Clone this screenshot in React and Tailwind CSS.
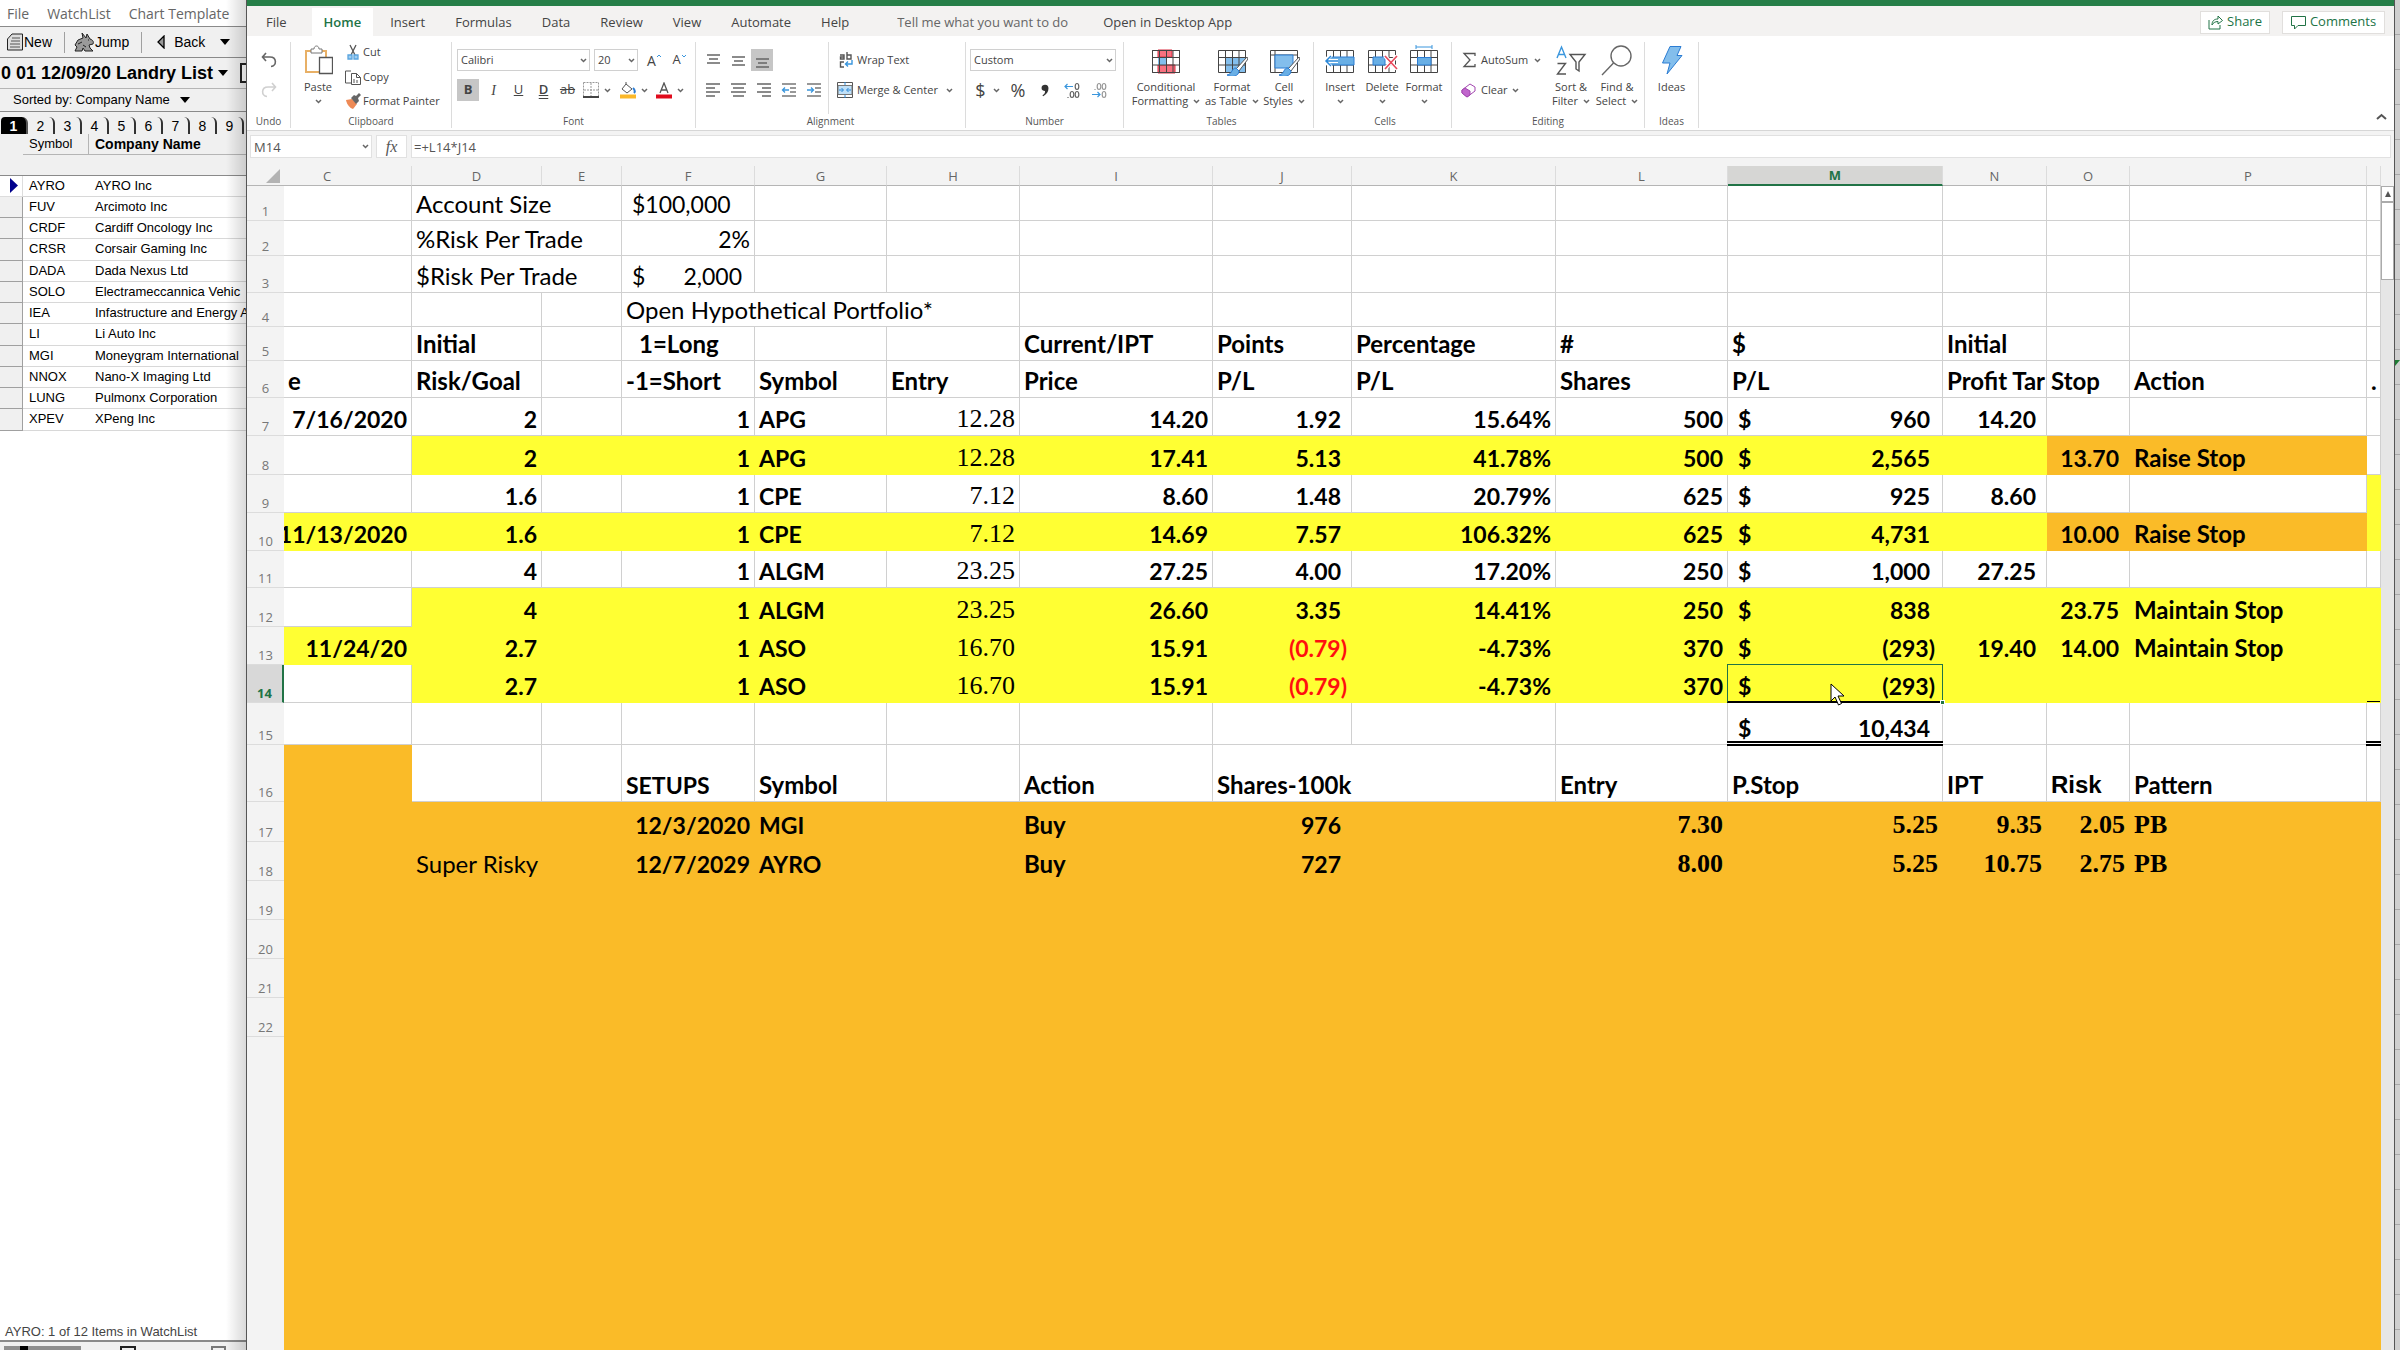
import { clsx } from "clsx"

const watchList = [
  ['AYRO', 'AYRO Inc'],
  ['FUV', 'Arcimoto Inc'],
  ['CRDF', 'Cardiff Oncology Inc'],
  ['CRSR', 'Corsair Gaming Inc'],
  ['DADA', 'Dada Nexus Ltd'],
  ['SOLO', 'Electrameccannica Vehic'],
  ['IEA', 'Infastructure and Energy A'],
  ['LI', 'Li Auto Inc'],
  ['MGI', 'Moneygram International'],
  ['NNOX', 'Nano-X Imaging Ltd'],
  ['LUNG', 'Pulmonx Corporation'],
  ['XPEV', 'XPeng Inc'],
]

const columns = [
  ['C', 'w-[128px]'],
  ['D', 'w-[130px]'],
  ['E', 'w-[80px]'],
  ['F', 'w-[133px]'],
  ['G', 'w-[132px]'],
  ['H', 'w-[133px]'],
  ['I', 'w-[193px]'],
  ['J', 'w-[139px]'],
  ['K', 'w-[204px]'],
  ['L', 'w-[172px]'],
  ['M', 'w-[215px]'],
  ['N', 'w-[104px]'],
  ['O', 'w-[83px]'],
  ['P', 'w-[237px]'],
  ['Q', ''],
]

// cell = [text, style, colSpan]
const styles = {
  left: 'justify-start pl-1 font-bold text-[24px]',
  ticker: 'justify-start pl-1 font-bold',
  right: 'justify-end pr-1 font-bold',
  // number formats that leave room for a closing bracket
  num: 'justify-end pr-[10px] font-bold',
  neg: 'justify-end pr-1 font-bold text-[#ff0f0f]',
  money: 'justify-between pl-[10px] pr-3 font-bold',
  moneyNeg: 'justify-between pl-[10px] pr-[7px] font-bold',
  plain: 'justify-start pl-1 text-[24px]',
  plainIn: 'justify-start pl-[10px]',
  plainRight: 'justify-end pr-1',
  plainMoney: 'justify-between pl-[10px] pr-3',
  label: 'justify-start pl-[17px] font-bold text-[24px]',
  serif: 'justify-end pr-1 font-["Liberation_Serif",serif] text-[26px]',
  serifBold: 'justify-end pr-1 font-["Liberation_Serif",serif] text-[26px] font-bold',
  serifLeft: 'justify-start pl-1 font-["Liberation_Serif",serif] text-[26px] font-bold',
  arial: 'justify-start pl-1 font-["Liberation_Sans",sans-serif] text-[24px] font-bold',
}

const rows = [
  { n: 1, h: 'h-[35px]', c: { D: ['Account Size', 'plain', 2], F: ['$100,000', 'plainIn'] } },
  { n: 2, h: 'h-[35px]', c: { D: ['%Risk Per Trade', 'plain', 2], F: ['2%', 'plainRight'] } },
  { n: 3, h: 'h-[37px]', c: { D: ['$Risk Per Trade', 'plain', 2], F: ['2,000', 'plainMoney'] } },
  { n: 4, h: 'h-[34px]', c: { F: ['Open Hypothetical Portfolio*', 'plain', 3] } },
  { n: 5, h: 'h-[34px]', c: { D: ['Initial', 'left'], F: ['1=Long', 'label'], I: ['Current/IPT', 'left'], J: ['Points', 'left'], K: ['Percentage', 'left'], L: ['#', 'left'], M: ['$', 'left'], N: ['Initial', 'left'] } },
  { n: 6, h: 'h-[37px]', c: { C: ['e', 'left'], D: ['Risk/Goal', 'left'], F: ['-1=Short', 'left'], G: ['Symbol', 'left'], H: ['Entry', 'left'], I: ['Price', 'left'], J: ['P/L', 'left'], K: ['P/L', 'left'], L: ['Shares', 'left'], M: ['P/L', 'left'], N: ['Profit Tar', 'left'], O: ['Stop', 'left'], P: ['Action', 'left'], Q: ['.', 'left'] } },
  { n: 7, h: 'h-[38px]', c: { C: ['7/16/2020', 'right'], D: ['2', 'right'], F: ['1', 'right'], G: ['APG', 'ticker'], H: ['12.28', 'serif'], I: ['14.20', 'right'], J: ['1.92', 'num'], K: ['15.64%', 'right'], L: ['500', 'right'], M: ['960', 'money'], N: ['14.20', 'num'] } },
  { n: 8, h: 'h-[39px]', yellow: 'DEFGHIJKLMN', orange: 'OP', c: { D: ['2', 'right'], F: ['1', 'right'], G: ['APG', 'ticker'], H: ['12.28', 'serif'], I: ['17.41', 'right'], J: ['5.13', 'num'], K: ['41.78%', 'right'], L: ['500', 'right'], M: ['2,565', 'money'], O: ['13.70', 'num'], P: ['Raise Stop', 'left'] } },
  { n: 9, h: 'h-[38px]', yellow: 'Q', c: { D: ['1.6', 'right'], F: ['1', 'right'], G: ['CPE', 'ticker'], H: ['7.12', 'serif'], I: ['8.60', 'right'], J: ['1.48', 'num'], K: ['20.79%', 'right'], L: ['625', 'right'], M: ['925', 'money'], N: ['8.60', 'num'] } },
  { n: 10, h: 'h-[38px]', yellow: 'CDEFGHIJKLMNQ', orange: 'OP', c: { C: ['11/13/2020', 'right'], D: ['1.6', 'right'], F: ['1', 'right'], G: ['CPE', 'ticker'], H: ['7.12', 'serif'], I: ['14.69', 'right'], J: ['7.57', 'num'], K: ['106.32%', 'right'], L: ['625', 'right'], M: ['4,731', 'money'], O: ['10.00', 'num'], P: ['Raise Stop', 'left'] } },
  { n: 11, h: 'h-[37px]', c: { D: ['4', 'right'], F: ['1', 'right'], G: ['ALGM', 'ticker'], H: ['23.25', 'serif'], I: ['27.25', 'right'], J: ['4.00', 'num'], K: ['17.20%', 'right'], L: ['250', 'right'], M: ['1,000', 'money'], N: ['27.25', 'num'] } },
  { n: 12, h: 'h-[39px]', yellow: 'DEFGHIJKLMNOPQ', c: { D: ['4', 'right'], F: ['1', 'right'], G: ['ALGM', 'ticker'], H: ['23.25', 'serif'], I: ['26.60', 'right'], J: ['3.35', 'num'], K: ['14.41%', 'right'], L: ['250', 'right'], M: ['838', 'money'], O: ['23.75', 'num'], P: ['Maintain Stop', 'left'] } },
  { n: 13, h: 'h-[38px]', yellow: 'CDEFGHIJKLMNOPQ', c: { C: ['11/24/20', 'right'], D: ['2.7', 'right'], F: ['1', 'right'], G: ['ASO', 'ticker'], H: ['16.70', 'serif'], I: ['15.91', 'right'], J: ['(0.79)', 'neg'], K: ['-4.73%', 'right'], L: ['370', 'right'], M: ['(293)', 'moneyNeg'], N: ['19.40', 'num'], O: ['14.00', 'num'], P: ['Maintain Stop', 'left'] } },
  { n: 14, h: 'h-[38px]', yellow: 'DEFGHIJKLMNOPQ', c: { D: ['2.7', 'right'], F: ['1', 'right'], G: ['ASO', 'ticker'], H: ['16.70', 'serif'], I: ['15.91', 'right'], J: ['(0.79)', 'neg'], K: ['-4.73%', 'right'], L: ['370', 'right'], M: ['(293)', 'moneyNeg'] } },
  { n: 15, h: 'h-[42px]', c: { M: ['10,434', 'money'] } },
  { n: 16, h: 'h-[57px]', orange: 'C', c: { F: ['SETUPS', 'ticker'], G: ['Symbol', 'left'], I: ['Action', 'left'], J: ['Shares-100k', 'left', 2], L: ['Entry', 'left'], M: ['P.Stop', 'left'], N: ['IPT', 'left'], O: ['Risk', 'arial'], P: ['Pattern', 'left'] } },
  { n: 17, h: 'h-[40px]', orange: 'CDEFGHIJKLMNOPQ', c: { F: ['12/3/2020', 'right'], G: ['MGI', 'ticker'], I: ['Buy', 'left'], J: ['976', 'num'], L: ['7.30', 'serifBold'], M: ['5.25', 'serifBold'], N: ['9.35', 'serifBold'], O: ['2.05', 'serifBold'], P: ['PB', 'serifLeft'] } },
  { n: 18, h: 'h-[39px]', orange: 'CDEFGHIJKLMNOPQ', c: { D: ['Super Risky', 'plain', 2], F: ['12/7/2029', 'right'], G: ['AYRO', 'ticker'], I: ['Buy', 'left'], J: ['727', 'num'], L: ['8.00', 'serifBold'], M: ['5.25', 'serifBold'], N: ['10.75', 'serifBold'], O: ['2.75', 'serifBold'], P: ['PB', 'serifLeft'] } },
  { n: 19, h: 'h-[39px]', orange: 'CDEFGHIJKLMNOPQ', c: {} },
  { n: 20, h: 'h-[39px]', orange: 'CDEFGHIJKLMNOPQ', c: {} },
  { n: 21, h: 'h-[39px]', orange: 'CDEFGHIJKLMNOPQ', c: {} },
  { n: 22, h: 'h-[39px]', orange: 'CDEFGHIJKLMNOPQ', c: {} },
]

const Chevron = ({ className }) => (
  <svg className={clsx('h-[5px] w-[7px] shrink-0', className)} viewBox="0 0 7 5" fill="none" stroke="#666" strokeWidth="1.5">
    <path d="M1 1l2.5 2.5L6 1" />
  </svg>
)

const Caret = () => (
  <svg className="h-[6px] w-[10px] shrink-0" viewBox="0 0 10 6"><path d="M0 0h10L5 6z" fill="#000" /></svg>
)

/* ---------- left window ---------- */

const WatchListPanel = () => (
  <aside className="relative flex w-[246px] shrink-0 flex-col overflow-hidden bg-white font-['Liberation_Sans',sans-serif] text-[13px] text-black">
    <nav className="flex h-[27px] items-center gap-[18px] border-b border-[#8a8a8a] pt-[2px] pl-[7px] font-['Open_Sans',sans-serif] text-sm whitespace-nowrap text-[#666]">
      <button type="button">File</button>
      <button type="button">WatchList</button>
      <button type="button">Chart Template</button>
    </nav>
    <div className="flex h-[31px] items-center border-b border-[#8a8a8a] bg-[#f0f0f0] pl-[7px] text-sm">
      <button type="button" className="flex items-center">
        <svg className="h-[18px] w-[17px]" viewBox="0 0 17 18" fill="#ddd" stroke="#222">
          <path d="M5 1h10.500v16H.5V6z" />
          <path d="M5 5h8M4 8h9M3 11h10M3 14h10" stroke="#555" />
        </svg>
        New
      </button>
      <span className="mr-[9px] ml-3 h-[21px] w-px bg-[#a0a0a0]" />
      <button type="button" className="flex items-center">
        <svg className="h-5 w-[21px]" viewBox="0 0 21 20" fill="#9a9a9a" stroke="#222">
          <path d="M8 1l4 5 1-4 3 5c3 1 4 3 3 5l-4 1 1 3 3 3h-8l-2-3-1 3H1l2-4-2-2 3-5 5-2z" />
          <path d="M14 8h1M4 12l4-2M9 13l3 2" />
        </svg>
        Jump
      </button>
      <span className="mr-[15px] ml-3 h-[21px] w-px bg-[#a0a0a0]" />
      <button type="button" className="flex items-center gap-[9px]">
        <svg className="h-[14px] w-[8px]" viewBox="0 0 8 14" fill="#999" stroke="#000" strokeWidth="1.300"><path d="M7 1v12L1 7z" /></svg>
        Back
        <span className="ml-[6px]"><Caret /></span>
      </button>
    </div>
    <div className="flex h-[31px] items-center border-b border-[#b5b5b5] bg-[#f0f0f0] pl-[1px]">
      <button type="button" className="flex items-center gap-[5px] text-lg font-bold whitespace-nowrap">
        0 01 12/09/20 Landry List
        <Caret />
      </button>
      <span className="ml-[12px] h-[20px] w-4 shrink-0 border-2 border-r-0 border-[#222] bg-white" />
    </div>
    <div className="flex h-[23px] items-center border-b border-[#8a8a8a] bg-[#f0f0f0] pl-[13px]">
      <button type="button" className="flex items-center gap-[10px]">Sorted by: Company Name <Caret /></button>
    </div>
    <div className="flex h-[22px] items-end bg-[#f0f0f0] pl-[1px] text-sm">
      {[1, 2, 3, 4, 5, 6, 7, 8, 9].map((n) => (
        <button
          key={n}
          type="button"
          className={clsx('flex h-[17px] w-[27px] shrink-0 items-center justify-center rounded-tr-md border-r-2 leading-4', n === 1 ? 'rounded-tl border-[#555] bg-black font-bold text-white' : 'border-[#333]')}
        >
          {n}
        </button>
      ))}
    </div>
    <table className="w-full table-fixed border-separate border-spacing-0 whitespace-nowrap">
      <colgroup>
        <col className="w-[23px]" />
        <col className="w-[66px]" />
        <col />
      </colgroup>
      <thead>
        <tr className="h-5 bg-[#f0f0f0] text-left">
          <th />
          <th className="border-r border-b border-[#b5b5b5] p-0 pl-[6px] font-normal">Symbol</th>
          <th className="border-b border-[#b5b5b5] p-0 pl-[6px] text-sm leading-4 font-bold">Company Name</th>
        </tr>
        <tr className="h-[21px] bg-[#f0f0f0]">
          <td colSpan="3" className="border-b border-[#8a8a8a]" />
        </tr>
      </thead>
    </table>
    <table className="h-[255px] w-full table-fixed border-separate border-spacing-0 whitespace-nowrap">
      <colgroup>
        <col className="w-[23px]" />
        <col className="w-[66px]" />
        <col />
      </colgroup>
      <tbody>
        {watchList.map(([symbol, name], i) => (
          <tr key={symbol}>
            <td className={clsx('border-r border-b p-0', i === 0 ? 'border-[#ddd] bg-white' : 'border-[#a0a0a0] bg-[#f0f0f0]')}>
              {i === 0 && <svg className="ml-[9px] h-[15px] w-[9px]" viewBox="0 0 9 15"><path d="M1 0l8 7.500L1 15z" fill="#00008b" /></svg>}
            </td>
            <td className="border-b border-[#d8d8d8] p-0 pl-[6px] leading-4">{symbol}</td>
            <td className="border-b border-[#d8d8d8] p-0 pl-[6px] leading-4">{name}</td>
          </tr>
        ))}
      </tbody>
    </table>
    <div className="flex-1" />
    <p className="border-b-2 border-[#8a8a8a] pl-[5px] leading-4 text-[#444]">AYRO: 1 of 12 Items in WatchList</p>
    <div className="flex h-2 items-end bg-[#f0f0f0] pl-1">
      <span className="flex h-1 w-[77px] bg-[#8f8f8f] pl-4"><span className="h-1 w-2 bg-black" /></span>
      <span className="ml-[39px] h-1 w-4 border-2 border-b-0 border-[#222]" />
      <span className="ml-[75px] h-1 w-[15px] border-2 border-b-0 border-[#777]" />
    </div>
    <div className="pointer-events-none absolute inset-y-0 right-0 w-5 bg-gradient-to-r from-transparent to-black/15" />
  </aside>
)

/* ---------- ribbon ---------- */

const Group = ({ label, className, children }) => (
  <section className={clsx('flex shrink-0 flex-col border-r border-[#dcdcdc]', className)} aria-label={label}>
    <div className="flex h-[72px] items-start">{children}</div>
    <p className="text-center text-[10px] leading-[14px] text-[#555]">{label}</p>
  </section>
)

const BigButton = ({ icon, lines, arrow, className }) => (
  <button type="button" className={clsx('flex shrink-0 flex-col items-center pt-[3px] leading-[14px] whitespace-nowrap', className)}>
    <span className="mb-[4px] flex h-[31px] items-center">{icon}</span>
    <span>{lines[0]}</span>
    {lines[1] ? <span className="flex items-center gap-[5px]">{lines[1]} {arrow && <Chevron />}</span> : arrow && <Chevron className="mt-[5px]" />}
  </button>
)

const Picker = ({ label, value, className }) => (
  <div className={clsx('relative flex h-[22px] items-center', className)}>
    <select aria-label={label} className="h-full w-full appearance-none rounded-none border border-[#d0d0d0] bg-white pl-[3px] text-[11px] leading-4 text-[#444]" defaultValue={value}>
      <option>{value}</option>
    </select>
    <Chevron className="pointer-events-none absolute right-[3px]" />
  </div>
)

const ToolButton = ({ label, active, className, children }) => (
  <button type="button" aria-label={label} className={clsx('flex h-[22px] shrink-0 items-center justify-center', active && 'bg-[#c6c6c6]', className)}>
    {children}
  </button>
)

const Lines = ({ rows: d }) => (
  <svg className="h-4 w-[15px]" viewBox="0 0 15 16" stroke="#666" strokeWidth="1.300"><path d={d} /></svg>
)

const GridIcon = ({ children }) => (
  <svg className="h-[31px] w-8" viewBox="0 0 32 31" fill="none" stroke="#444">
    {children}
  </svg>
)

const grid = 'M2.5 5.500h27v22h-27zM2.500 12.500h27M2.500 20h27M9.500 5.500v22M16.500 5.500v22M23 5.500v22'

const Brush = () => (
  <g>
    <path d="M31 12L20 24l3 2 9-12z" fill="#fff" stroke="#555" />
    <path d="M20 23c-5 0-3 6-9 7 5 3 12 1 12-4z" fill="#69afe5" stroke="#2b7cd3" />
  </g>
)

const PasteIcon = () => (
  <svg className="h-[31px] w-[29px]" viewBox="0 0 29 31" fill="none">
    <path d="M2 6h20v21H2z" stroke="#e8b066" strokeWidth="2" fill="#fff" />
    <path d="M7 8V4h3c0-4 5-4 5 0h3v4z" stroke="#777" fill="#fff" />
    <path d="M15.500 12.500h13v16h-13z" stroke="#555" fill="#fff" strokeWidth="1.300" />
  </svg>
)

const CutIcon = () => (
  <svg className="h-4 w-4" viewBox="0 0 16 16" fill="none" stroke="#555" strokeWidth="1.300">
    <path d="M5 1l5 10M11 1L6 11" />
    <path d="M3 11h4v4H3zM9 11h4v4H9z" stroke="#5aa5df" fill="#9fcdf0" />
  </svg>
)

const CopyIcon = () => (
  <svg className="h-4 w-4" viewBox="0 0 16 16" fill="none" stroke="#555">
    <path d="M6 2H.5v12H6M6.500 4.500h5l4 4v7h-9zM11.500 4.500v4h4M9 10v4M12 11v3" />
  </svg>
)

const PainterIcon = () => (
  <svg className="h-4 w-4" viewBox="0 0 16 16">
    <path d="M1 7l6-1 5 5-4 5c-3-1-6-4-7-9z" fill="#ee8a56" />
    <path d="M6 5l3-3 2 1 3-3 2 2-3 3 1 3-3 3z" fill="#666" />
  </svg>
)

const WrapIcon = () => (
  <svg className="h-4 w-[14px]" viewBox="0 0 14 16" fill="none" stroke="#555" strokeWidth="1.400">
    <path d="M1 3h4v4H1.500V5H5M8 0v7h4V3H8M5 10H1.500v5H5" />
    <path d="M13 8v4H7M9 9.500L6.500 12 9 14.500" stroke="#3a96dd" />
  </svg>
)

const MergeIcon = () => (
  <svg className="h-4 w-4" viewBox="0 0 16 16" fill="none" stroke="#555">
    <path d="M.5.5h15v15H.5z" />
    <path d="M1 3.500h14v9H1z" fill="#bfe0f8" stroke="#777" />
    <path d="M2 8h4M4.500 6L6.500 8l-2 2M14 8h-4M11.500 6l-2 2 2 2M8 0v3M8 13v3" stroke="#2b88d8" />
  </svg>
)

const IndentIcon = ({ out }) => (
  <svg className="h-4 w-4" viewBox="0 0 16 16" fill="none" stroke="#777" strokeWidth="1.300">
    <path d="M1 2h14M9 6h6M9 10h6M1 14h14" />
    <path d={out ? 'M8 8H2M4 5.500L1.500 8 4 10.500' : 'M1 8h6M5 5.500L7.500 8 5 10.500'} stroke="#3a96dd" />
  </svg>
)

// zeros are plain ellipses, too small for real digits
const DecimalIcon = ({ less }) => (
  <svg className="h-[17px] w-4" viewBox="0 0 16 17" fill="none" stroke={less ? '#999' : '#666'} strokeWidth="1.200">
    <ellipse cx="13" cy="4.500" rx="1.800" ry="3" />
    <ellipse cx="13" cy="12.500" rx="1.800" ry="3" />
    {less ? <ellipse cx="8" cy="4.500" rx="1.800" ry="3" /> : <ellipse cx="8" cy="12.500" rx="1.800" ry="3" />}
    <path d={less ? 'M4 7v1' : 'M4 15v1'} />
    <path d={less ? 'M1 12.500h8M6.500 10L9 12.500 6.500 15' : 'M9 4.500H1M3.500 2L1 4.500 3.500 7'} stroke="#3a96dd" />
  </svg>
)

const tabs = ['Insert', 'Formulas', 'Data', 'Review', 'View', 'Automate', 'Help']

const TabBar = () => (
  <div className="flex h-[30px] items-stretch bg-[#f3f2f1] pt-[2px] pl-1 text-[13px] whitespace-nowrap text-[#444]">
    <button type="button" className="px-[15px] pt-px">File</button>
    <button type="button" className="mr-[2px] ml-[10px] bg-white px-3 pt-px font-semibold text-[#217346]">Home</button>
    {tabs.map((tab) => <button key={tab} type="button" className="px-[15px] pt-px">{tab}</button>)}
    <input aria-label="Tell me what you want to do" placeholder="Tell me what you want to do" className="ml-[33px] w-[191px] bg-transparent pt-px placeholder:text-[#666]" />
    <a href="#desktop" className="flex items-center px-[15px] pt-px">Open in Desktop App</a>
    <div className="ml-auto flex items-center gap-3 pr-[9px] text-[#217346]">
      <button type="button" className="flex h-[23px] w-[70px] items-center justify-center gap-1 border border-[#e1dfdd] bg-white">
        <svg className="h-[15px] w-[15px]" viewBox="0 0 15 15" fill="none" stroke="#217346"><path d="M1 5v9h11v-4M4 10c0-4 2-6 6-6V1l4.500 4.500L10 9V6.500C7 6.500 5 8 4 10z" /></svg>
        Share
      </button>
      <button type="button" className="flex h-[23px] w-[103px] items-center justify-center gap-1 border border-[#e1dfdd] bg-white">
        <svg className="h-[15px] w-[15px]" viewBox="0 0 15 15" fill="none" stroke="#217346"><path d="M.5 1.500h14v9H7L3.500 14v-3.500h-3z" /></svg>
        Comments
      </button>
    </div>
  </div>
)

const Ribbon = () => (
  <div className="flex h-[95px] items-start border-b border-[#d6d6d6] bg-white pt-[6px] text-[11px] text-[#444]">
    <Group label="Undo" className="w-[44px]">
      <div className="flex w-full flex-col items-center gap-[14px] pt-[10px]">
        <button type="button" aria-label="Undo">
          <svg className="h-4 w-4" viewBox="0 0 16 16" fill="none" stroke="#666" strokeWidth="1.600"><path d="M5 1L1.500 5 5 9M2 5h7c7 0 7 9 1 9.500" /></svg>
        </button>
        <button type="button" aria-label="Redo">
          <svg className="h-4 w-4" viewBox="0 0 16 16" fill="none" stroke="#d0d0d0" strokeWidth="1.600"><path d="M11 1l3.500 4L11 9M14 5H7C0 5 0 14 6 14.500" /></svg>
        </button>
      </div>
    </Group>
    <Group label="Clipboard" className="w-[161px]">
      <BigButton icon={<PasteIcon />} lines={['Paste']} arrow className="w-[54px]" />
      <div className="flex flex-col gap-2 pt-[2px] whitespace-nowrap">
        <button type="button" className="flex items-center gap-[2px]"><CutIcon />Cut</button>
        <button type="button" className="flex items-center gap-[2px]"><CopyIcon />Copy</button>
        <button type="button" className="flex items-center gap-[2px]"><PainterIcon />Format Painter</button>
      </div>
    </Group>
    <Group label="Font" className="w-[244px]">
      <div className="flex flex-col gap-2 pt-[7px] pl-[5px]">
        <div className="flex items-center">
          <Picker label="Font" value="Calibri" className="w-[133px]" />
          <Picker label="Font size" value="20" className="ml-1 w-[44px]" />
          <ToolButton label="Increase font size" className="ml-1 w-[25px] text-[14px]">A<svg className="mb-2 h-1 w-[6px]" viewBox="0 0 6 4" fill="none" stroke="#3a96dd"><path d="M1 3l2-2 2 2" /></svg></ToolButton>
          <ToolButton label="Decrease font size" className="w-[25px] text-[13px]">A<svg className="mb-2 h-1 w-[6px]" viewBox="0 0 6 4" fill="none" stroke="#3a96dd"><path d="M1 1l2 2 2-2" /></svg></ToolButton>
        </div>
        <div className="flex items-center text-[13px]">
          <ToolButton label="Bold" active className="w-[22px] font-bold">B</ToolButton>
          <ToolButton label="Italic" className="ml-[2px] w-[25px] font-['Liberation_Serif',serif] text-[14px] italic">I</ToolButton>
          <ToolButton label="Underline" className="w-[25px] underline">U</ToolButton>
          <ToolButton label="Double underline" className="w-[25px] font-semibold underline decoration-double">D</ToolButton>
          <ToolButton label="Strikethrough" className="w-[23px] line-through">ab</ToolButton>
          <ToolButton label="Borders" className="w-[36px] gap-[5px]">
            <svg className="h-4 w-4" viewBox="0 0 16 16" fill="none" stroke="#999"><path d="M.5.5h15v14M.5.500v14M8 1v13M1 8h14" strokeDasharray="2 1" /><path d="M0 15h16" stroke="#444" strokeWidth="2" /></svg>
            <Chevron />
          </ToolButton>
          <ToolButton label="Fill colour" className="w-[37px] gap-[5px]">
            <svg className="h-[17px] w-4" viewBox="0 0 16 17" fill="none" stroke="#555"><path d="M6 2l6 5-5 4-5-4zM6 2V0" /><path d="M13 6c2 2 2 4 1 5" stroke="#2b7cd3" strokeWidth="2" /><path d="M0 14.500h16" stroke="#fbb829" strokeWidth="4" /></svg>
            <Chevron />
          </ToolButton>
          <ToolButton label="Font colour" className="w-[36px] gap-[5px]">
            <svg className="h-[17px] w-4" viewBox="0 0 16 17" fill="none" stroke="#555" strokeWidth="1.300"><path d="M4 11l4-10 4 10M5.500 8h5" /><path d="M0 14.500h16" stroke="#e00b1c" strokeWidth="4" /></svg>
            <Chevron />
          </ToolButton>
        </div>
      </div>
    </Group>
    <Group label="Alignment" className="w-[270px]">
      <div className="flex h-[72px] w-[133px] shrink-0 flex-col gap-2 border-r border-[#dcdcdc] pt-[7px] pl-[5px]">
        <div className="flex">
          <ToolButton label="Top align" className="w-[25px]"><Lines rows="M1 3h13M3 7h9M1 11h13" /></ToolButton>
          <ToolButton label="Middle align" className="w-[25px]"><Lines rows="M1 5h13M3 9h9M1 13h13" /></ToolButton>
          <ToolButton label="Bottom align" active className="w-[22px]"><Lines rows="M1 7h13M3 11h9M1 15h13" /></ToolButton>
        </div>
        <div className="flex">
          <ToolButton label="Align left" className="w-[25px]"><Lines rows="M0 2h14M0 6h9M0 10h14M0 14h9" /></ToolButton>
          <ToolButton label="Center" className="w-[25px]"><Lines rows="M0 2h15M2 6h11M0 10h15M2 14h11" /></ToolButton>
          <ToolButton label="Align right" className="w-[24px]"><Lines rows="M1 2h14M6 6h9M1 10h14M6 14h9" /></ToolButton>
          <ToolButton label="Decrease indent" className="w-[28px]"><IndentIcon out /></ToolButton>
          <ToolButton label="Increase indent" className="w-[22px]"><IndentIcon /></ToolButton>
        </div>
      </div>
      <div className="flex flex-col items-start gap-2 pt-[7px] pl-2 whitespace-nowrap">
        <button type="button" className="flex h-[22px] items-center gap-1 pl-[2px]"><WrapIcon />Wrap Text</button>
        <button type="button" className="flex h-[22px] items-center gap-1"><MergeIcon />Merge &amp; Center<Chevron className="ml-1" /></button>
      </div>
    </Group>
    <Group label="Number" className="w-[158px]">
      <div className="flex flex-col gap-2 pt-[7px] pl-1">
        <Picker label="Number format" value="Custom" className="w-[146px]" />
        <div className="flex items-center text-[18px] text-[#444]">
          <ToolButton label="Accounting format" className="w-[35px] gap-[7px]">$<Chevron /></ToolButton>
          <ToolButton label="Percent style" className="w-[26px]">%</ToolButton>
          <ToolButton label="Comma style" className="w-[28px]"><svg className="h-[13px] w-2" viewBox="0 0 8 15" fill="#333"><path d="M4 1c3 0 4 2 4 4 0 4-2 7-6 9l-1-1c3-2 3-3 3-5-2 0-4-1-4-3.500C0 2 2 1 4 1z" /></svg></ToolButton>
          <ToolButton label="Increase decimal" className="w-[26px]"><DecimalIcon /></ToolButton>
          <ToolButton label="Decrease decimal" className="w-[28px]"><DecimalIcon less /></ToolButton>
        </div>
      </div>
    </Group>
    <Group label="Tables" className="w-[190px] pl-[6px]">
      <BigButton
        lines={['Conditional', 'Formatting']}
        arrow
        className="w-[72px]"
        icon={<GridIcon><path d="M2.500 5.500h27v22h-27z" fill="#fff" /><path d="M8 5h14v7H8zM8 20h17v8H8z" fill="#f8717f" stroke="#d92f42" /><path d="M8 12h9v8H8z" fill="#83beec" stroke="none" /><path d={grid} /></GridIcon>}
      />
      <BigButton
        lines={['Format', 'as Table']}
        arrow
        className="w-[60px]"
        icon={<GridIcon><path d="M9 12h21v16H9z" fill="#83beec" stroke="none" /><path d={grid} /><Brush /></GridIcon>}
      />
      <BigButton
        lines={['Cell', 'Styles']}
        arrow
        className="w-[44px]"
        icon={<GridIcon><path d="M2.500 5.500h27v22h-27zM2.500 10h27M7 5v22" /><path d="M7 10h18v13H7z" fill="#83beec" stroke="#2b7cd3" /><Brush /></GridIcon>}
      />
    </Group>
    <Group label="Cells" className="w-[138px] pl-[5px]">
      <BigButton
        lines={['Insert']}
        arrow
        className="w-[42px]"
        icon={<GridIcon><path d={grid} /><path d="M6 12h24v8H6z" fill="#69afe5" stroke="#2b7cd3" /><path d="M14 16H2M7 10l-6 6 6 6" stroke="#fff" strokeWidth="4" /><path d="M14 16H2M7 11l-5 5 5 5" stroke="#2b88d8" strokeWidth="1.500" /></GridIcon>}
      />
      <BigButton
        lines={['Delete']}
        arrow
        className="w-[42px]"
        icon={<GridIcon><path d={grid} /><path d="M7 12h12v8H7z" fill="#69afe5" stroke="#2b7cd3" /><path d="M19 11l12 13M31 11L19 24" stroke="#fff" strokeWidth="4" /><path d="M19 11l12 13M31 11L19 24" stroke="#e8475a" strokeWidth="1.600" /></GridIcon>}
      />
      <BigButton
        lines={['Format']}
        arrow
        className="w-[42px]"
        icon={<GridIcon><path d={grid} /><path d="M9.500 12.500H23V20H9.500z" fill="#69afe5" stroke="#2b7cd3" /><path d="M8 2h16M8 0v4M24 0v4" stroke="#3a96dd" /></GridIcon>}
      />
    </Group>
    <Group label="Editing" className="w-[193px]">
      <div className="flex w-[96px] shrink-0 flex-col items-start gap-2 pt-[7px] pl-[9px]">
        <button type="button" className="flex h-[22px] items-center gap-1">
          <svg className="h-4 w-4" viewBox="0 0 16 16" fill="none" stroke="#555" strokeWidth="1.300"><path d="M14 4V1.500H3L9 8l-6 6.500h11V12" /></svg>
          AutoSum<Chevron className="ml-[2px]" />
        </button>
        <button type="button" className="flex h-[22px] items-center gap-1">
          <svg className="h-4 w-4" viewBox="0 0 16 16" fill="#fff" stroke="#a347b0"><path d="M9 2l5 3v4l-8 6-5-4V8z" /><path d="M4 6l5 3v4l-3 2-5-4V8z" fill="#c066cc" /></svg>
          Clear<Chevron />
        </button>
      </div>
      <BigButton
        lines={['Sort &', 'Filter']}
        arrow
        className="w-[46px]"
        icon={<svg className="h-[31px] w-8" viewBox="0 0 32 31" fill="none" strokeWidth="1.400"><path d="M2 13L6.500 2 11 13M3.500 9.500h6" stroke="#3a96dd" /><path d="M2.500 18.500h8l-8 10.500h8.500M15 9.500h15l-6 7.500v9l-3-2v-7z" stroke="#555" /></svg>}
      />
      <BigButton
        lines={['Find &', 'Select']}
        arrow
        className="w-[46px]"
        icon={<svg className="h-[31px] w-8" viewBox="0 0 32 31" fill="none" stroke="#666" strokeWidth="1.400"><circle cx="20" cy="11" r="10" /><path d="M12.500 18L1 30" /></svg>}
      />
    </Group>
    <Group label="Ideas" className="w-[54px]">
      <BigButton
        lines={['Ideas']}
        className="w-[53px]"
        icon={<svg className="h-[31px] w-[22px]" viewBox="0 0 22 31" fill="#83beec" stroke="#2b7cd3"><path d="M9 1.500h11l-4 9h5L6 29l3-11H1.500z" /></svg>}
      />
    </Group>
    <button type="button" aria-label="Collapse ribbon" className="mt-[71px] mr-[7px] ml-auto">
      <svg className="h-[7px] w-[11px]" viewBox="0 0 11 7" fill="none" stroke="#555" strokeWidth="2"><path d="M1 6l4.500-4L10 6" /></svg>
    </button>
  </div>
)

const FormulaBar = () => (
  <div className="flex h-[35px] items-start gap-1 bg-[#f3f3f3] pt-1 pr-[3px] pl-[3px] text-[13px] text-[#555]">
    <div className="relative flex h-[23px] w-[122px] items-center">
      <input aria-label="Name box" className="h-full w-full border border-[#e1e1e1] bg-white pl-[3px]" defaultValue="M14" />
      <Chevron className="absolute right-[3px]" />
    </div>
    <button type="button" className="h-[23px] w-[31px] border border-[#e1e1e1] bg-white font-['Liberation_Serif',serif] text-[16px] leading-5 italic">fx</button>
    <input aria-label="Formula" className="h-[23px] min-w-0 flex-1 border border-[#e1e1e1] bg-white pl-[2px]" defaultValue="=+L14*J14" />
  </div>
)

/* ---------- sheet ---------- */

const Cell = ({ row, col, cell }) => {
  const [text, style, span] = cell || []
  const yellow = row.yellow?.includes(col)
  const orange = row.orange?.includes(col)
  const filled = yellow || orange
  const selected = row.n === 14 && col === 'M'
  const total = row.n === 15 && (col === 'M' || col === 'Q')
  return (
    <td
      colSpan={span}
      className={clsx(
        'relative border-r border-b p-0 align-bottom',
        filled ? 'border-transparent' : 'border-[#d0d0d0]',
        yellow && 'bg-[#ffff33]',
        orange && 'bg-[#fabb28]',
        !filled && 'bg-white',
      )}
    >
      {text && (
        <div className={clsx('flex overflow-hidden pb-[2px] leading-7 whitespace-nowrap', styles[style])}>
          {style.toLowerCase().includes('money') && <span>$</span>}
          <span>{text}</span>
        </div>
      )}
      {row.n === 14 && col === 'Q' && <div className="absolute inset-x-0 bottom-0 h-px bg-black" />}
      {total && <div className="absolute -right-px -bottom-[2px] -left-px z-10 h-[5px] border-y-2 border-black bg-white" />}
      {selected && (
        <>
          <div className="absolute -inset-px z-10 border border-b-2 border-[#217346] border-b-black" />
          <div className="absolute -right-[3px] -bottom-[3px] z-10 h-[5px] w-[5px] border border-white bg-[#217346]" />
          <svg className="absolute top-[18px] left-[102px] z-10 h-6 w-4" viewBox="0 0 16 24" fill="#fff" stroke="#000">
            <path d="M1 1v17l4-4 3.500 8 3-1.500L8 13h6z" />
          </svg>
        </>
      )}
    </td>
  )
}

const SheetRow = ({ row }) => {
  const cells = []
  let i = 0
  while (i < columns.length) {
    const col = columns[i][0]
    cells.push(<Cell key={col} row={row} col={col} cell={row.c[col]} />)
    i += row.c[col]?.[2] || 1
  }
  return (
    <tr className={row.h}>
      <th
        scope="row"
        className={clsx(
          "border-b border-[#dcdcdc] p-0 align-bottom font-['Open_Sans',sans-serif] text-[13px] leading-[18px]",
          row.n === 14 ? 'border-r-2 border-r-[#217346] bg-[#d8d8d8] font-bold text-[#217346]' : 'bg-[#f3f3f3] font-normal text-[#777]',
        )}
      >
        {row.n}
      </th>
      {cells}
    </tr>
  )
}

const Sheet = () => (
  <div className="flex min-h-0 flex-1 bg-[#e6e6e6]">
    <div className="flex min-w-0 flex-1 flex-col">
      <table className="w-full table-fixed border-separate border-spacing-0 font-[Lato,sans-serif] text-[23px] text-black">
        <colgroup>
          <col className="w-[37px]" />
          {columns.map(([col, width]) => <col key={col} className={width} />)}
        </colgroup>
        <thead>
          <tr className="h-5 bg-[#f3f3f3] font-['Open_Sans',sans-serif] text-[13px] leading-[18px] text-[#666]">
            <th aria-label="Select all" className="border-b border-[#b5b5b5] p-0">
              <svg className="ml-[19px] h-[14px] w-[14px]" viewBox="0 0 14 14"><path d="M14 0v14H0z" fill="#b3b3b3" /></svg>
            </th>
            {columns.map(([col]) => (
              <th
                key={col}
                scope="col"
                className={clsx(
                  'overflow-hidden border-r border-r-[#dcdcdc] p-0',
                  col === 'M' ? 'border-b-2 border-b-[#217346] bg-[#d6d6d4] font-bold text-[#217346]' : 'border-b border-b-[#b5b5b5] font-normal',
                  col === 'C' && 'pr-[41px]',
                )}
              >
                {col === 'Q' ? '' : col}
              </th>
            ))}
          </tr>
        </thead>
        <tbody>
          {rows.map((row) => <SheetRow key={row.n} row={row} />)}
        </tbody>
      </table>
      <div className="flex flex-1">
        <div className="w-[37px] bg-[#f3f3f3]" />
        <div className="flex-1 bg-[#fabb28]" />
      </div>
    </div>
    <div className="flex w-[13px] shrink-0 flex-col">
      <div className="h-5 bg-[#f3f3f3]" />
      <button type="button" aria-label="Scroll up" className="flex h-[16px] items-center justify-center border border-[#ababab] bg-white">
        <svg className="h-[6px] w-[6px]" viewBox="0 0 6 6"><path d="M3 0l3 6H0z" fill="#555" /></svg>
      </button>
      <div className="h-[78px] border border-[#ababab] bg-white" />
    </div>
  </div>
)

const App = () => {
  return (
    <div className="flex h-screen w-full overflow-hidden bg-[#c9c9c9]">
      <WatchListPanel />
      <main className="flex min-w-0 flex-1 flex-col border-r border-l border-[#555] font-['Open_Sans',sans-serif]">
        <div className="h-[6px] bg-[#267f48]" />
        <TabBar />
        <Ribbon />
        <FormulaBar />
        <Sheet />
      </main>
      <div className="w-[5px] shrink-0 bg-[repeating-linear-gradient(to_bottom,#cfcfcf_0px,#cfcfcf_34px,#a8a8a8_34px,#a8a8a8_35px)] pt-[360px]">
        <div className="h-[6px] w-[5px] bg-[#1e7b34] [clip-path:polygon(0_0,100%_0,0_100%)]" />
      </div>
    </div>
  )
}

export default App
